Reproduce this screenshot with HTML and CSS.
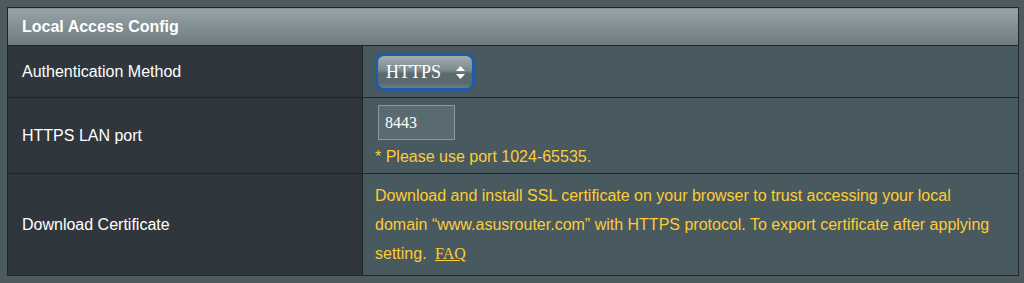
FILE: index.html
```html
<!DOCTYPE html>
<html lang="en">
<head>
    <meta charset="UTF-8">
    <meta name="viewport" content="width=device-width, initial-scale=1.0">
    <title>Local Access Config</title>
    <link rel="stylesheet" href="styles.css">
</head>
<body>
    <table class="config">
        <thead>
            <tr>
                <th colspan="2">Local Access Config</th>
            </tr>
        </thead>
        <tbody>
            <tr class="row-auth">
                <td class="label">Authentication Method</td>
                <td class="value">
                    <div class="select-wrap">
                        <select class="select">
                            <option>HTTPS</option>
                            <option>HTTP</option>
                            <option>BOTH</option>
                        </select>
                        <svg class="arrows" width="11" height="15" viewBox="0 0 11 15">
                            <path d="M5.5 1 L10 6 L1 6 Z" fill="#fff"/>
                            <path d="M5.5 14 L10 9 L1 9 Z" fill="#fff"/>
                        </svg>
                    </div>
                </td>
            </tr>
            <tr class="row-port">
                <td class="label">HTTPS LAN port</td>
                <td class="value">
                    <input type="text" class="port" value="8443">
                    <div class="hint">* Please use port 1024-65535.</div>
                </td>
            </tr>
            <tr class="row-cert">
                <td class="label">Download Certificate</td>
                <td class="value">
                    <p class="desc">Download and install SSL certificate on your browser to trust accessing your local domain “www.asusrouter.com” with HTTPS protocol. To export certificate after applying setting. <a href="#" class="faq">FAQ</a></p>
                </td>
            </tr>
        </tbody>
    </table>
</body>
</html>
```

FILE: styles.css
```css
body {
    margin: 0;
    padding: 7px 5px 7px 7px;
    background-color: #4d5a60;
    font-family: "Liberation Sans", Arial, sans-serif;
    color: #fff;
}
.config {
    width: 1012px;
    border-collapse: collapse;
    border: 1px solid #20272b;
}
.config th {
    height: 37px;
    padding: 0 14px;
    text-align: left;
    font-size: 16px;
    font-weight: bold;
    color: #fff;
    background: linear-gradient(#97a4a7, #6d7a7e);
    border-bottom: 1px solid #20272b;
}
.config td {
    border: 1px solid #20272b;
    vertical-align: middle;
}
.label {
    width: 326px;
    padding: 0 14px;
    font-size: 16px;
    background-color: #2f373d;
}
.value {
    padding: 0 12px;
    background-color: #485a5f;
}
.row-auth td {
    height: 51px;
}
.row-port td {
    height: 75px;
}
.row-cert td {
    height: 101px;
}
.select-wrap {
    position: relative;
    width: 100px;
    height: 38px;
}
.select {
    appearance: none;
    -webkit-appearance: none;
    width: 100px;
    height: 38px;
    margin: 0;
    padding: 0 0 0 8px;
    border: 3px solid #1d5ca9;
    border-radius: 9px;
    background: linear-gradient(#a3adb0 0%, #7d898c 45%, #5b6a6f 55%, #5a696d 85%, #6f7d81 100%);
    color: #fff;
    font-family: "Liberation Serif", "Times New Roman", serif;
    font-size: 18px;
    outline: none;
}
.arrows {
    position: absolute;
    left: 80px;
    top: 12px;
    pointer-events: none;
}
.port {
    display: block;
    width: 77px;
    height: 35px;
    margin: 0 0 0 3px;
    padding: 0 6px;
    box-sizing: border-box;
    border: 1px solid #8a999d;
    background-color: #596b70;
    color: #fff;
    font-family: "Liberation Serif", "Times New Roman", serif;
    font-size: 16px;
}
.hint {
    margin-top: 8px;
    font-size: 16px;
    color: #ffcc33;
}
.desc {
    margin: 0;
    font-size: 16px;
    line-height: 29px;
    color: #ffcc33;
}
.faq {
    margin-left: 4px;
    color: #ffcc33;
    font-family: "Liberation Serif", "Times New Roman", serif;
    font-size: 16px;
}
```
